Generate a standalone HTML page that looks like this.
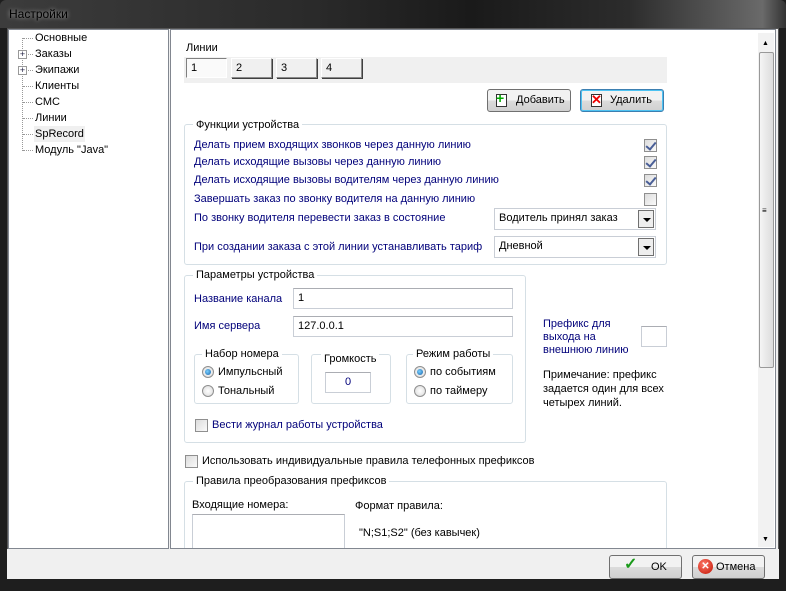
<!DOCTYPE html>
<html><head><meta charset="utf-8"><style>
*{box-sizing:border-box;margin:0;padding:0}
body{width:786px;height:591px;overflow:hidden;font-family:"Liberation Sans",sans-serif;font-size:11px;background:#1e1e1e;position:relative;color:#000}
.a{position:absolute}
.t{position:absolute;white-space:nowrap;line-height:13px}
.b{color:#00007a}
.grp{position:absolute;border:1px solid #d5dfe5;border-radius:3px}
.gt{position:absolute;background:#fff;padding:0 3px;line-height:13px;white-space:nowrap}
.inp{position:absolute;background:#fff;border:1px solid #c9ced6;border-top-color:#abadb3;padding:2px 4px;line-height:14px}
.cb{position:absolute;width:13px;height:13px;border:1px solid #8f8f8f;background:linear-gradient(135deg,#dcdcdc,#fafafa)}
.chk::after{content:"";position:absolute;left:3px;top:0px;width:4px;height:8px;border:solid #4a5f97;border-width:0 2px 2px 0;transform:rotate(40deg)}
.rb{position:absolute;width:12px;height:12px;border-radius:50%;border:1px solid #8f8f8f;background:radial-gradient(#fff,#d8d8d8)}
.rb.on::after{content:"";position:absolute;left:2px;top:2px;width:6px;height:6px;border-radius:50%;background:radial-gradient(circle at 40% 40%,#7ad0ff,#1560a8)}
.btn{position:absolute;border:1px solid #707070;border-radius:3px;background:linear-gradient(#f2f2f2 50%,#dcdcdc 50%,#d0d0d0);text-align:center}
.tab{position:absolute;height:20px;border:1px solid #8a8a8a;border-top-color:#fff;border-left-color:#fff;background:#f0f0f0;padding:3px 4px;line-height:13px;box-shadow:1px 1px 0 #404040}
.cmb{position:absolute;background:#fff;border:1px solid #c9ced6;padding:3px 4px;line-height:13px}
.arr{position:absolute;right:1px;top:1px;width:16px;height:18px;border:1px solid #707070;background:#eee}
.arr::after{content:"";position:absolute;left:4px;top:7px;border:4px solid transparent;border-top:4px solid #000;border-bottom:0}
.tl{position:absolute;left:35px;line-height:16px;white-space:nowrap}
.dt{position:absolute;left:23px;width:10px;border-top:1px dotted #999}
</style></head><body>
<div class="a" style="left:0;top:0;width:786px;height:28px;background:linear-gradient(90deg,#3c3c3c 0%,#2a2a2a 40%,#1a1a1a 60%,#2c2c2c 80%,#6a6a6a 97%,#333 100%);border-radius:6px 6px 0 0"></div>
<div class="t" style="left:9px;top:8px;font-size:12px;color:#000;text-shadow:0 0 4px #bbb">Настройки</div>
<div class="a" style="left:7px;top:28px;width:772px;height:551px;background:#f0f0f0;border:1px solid #555"></div>
<!-- tree -->
<div class="a" style="left:8px;top:29px;width:161px;height:520px;background:#fff;border:1px solid #828790"></div>
<div class="a" style="left:22px;top:38px;height:113px;border-left:1px dotted #999"></div>
<div class="dt" style="top:38px"></div><div class="dt" style="top:54px;left:28px;width:5px"></div><div class="dt" style="top:70px;left:28px;width:5px"></div>
<div class="dt" style="top:86px"></div><div class="dt" style="top:102px"></div><div class="dt" style="top:118px"></div><div class="dt" style="top:134px"></div><div class="dt" style="top:150px"></div>
<div class="tl" style="top:30px">Основные</div>
<div class="tl" style="top:46px">Заказы</div>
<div class="tl" style="top:62px">Экипажи</div>
<div class="tl" style="top:78px">Клиенты</div>
<div class="tl" style="top:94px">СМС</div>
<div class="tl" style="top:110px">Линии</div>
<div class="tl" style="top:126px;background:#f0f0f0;padding:0 1px;left:34px">SpRecord</div>
<div class="tl" style="top:142px">Модуль "Java"</div>
<div class="a" style="left:18px;top:50px;width:9px;height:9px;border:1px solid #999;background:#fff;font-size:9px;line-height:7px;text-align:center;color:#224">+</div>
<div class="a" style="left:18px;top:66px;width:9px;height:9px;border:1px solid #999;background:#fff;font-size:9px;line-height:7px;text-align:center;color:#224">+</div>
<!-- right panel -->
<div class="a" style="left:170px;top:29px;width:606px;height:520px;background:#fff;border:1px solid #828790;overflow:hidden">
<div class="inp" style="left:21px;top:484px;width:153px;height:40px"></div>
<div class="grp" style="left:13px;top:451px;width:483px;height:80px"></div>
</div>
<div class="a" style="left:758px;top:33px;width:16px;height:514px;background:#f2f2f2"></div>
<div class="a" style="left:759px;top:52px;width:15px;height:316px;border:1px solid #999;border-radius:2px;background:linear-gradient(90deg,#f5f5f5,#dcdcdc)"></div>
<div class="t" style="left:762px;top:204px;font-size:8px">≡</div>
<div class="t" style="left:762px;top:37px;font-size:7px">▲</div>
<div class="t" style="left:762px;top:533px;font-size:7px">▼</div>
<div class="t" style="left:186px;top:42px">Линии</div>
<div class="a" style="left:184px;top:57px;width:483px;height:26px;background:#f0f0f0"></div>
<div class="tab" style="left:186px;top:58px;width:41px;background:#fafafa;border-color:#808080 #fff #fff #808080;box-shadow:none">1</div>
<div class="tab" style="left:231px;top:58px;width:41px">2</div>
<div class="tab" style="left:276px;top:58px;width:41px">3</div>
<div class="tab" style="left:321px;top:58px;width:41px">4</div>
<div class="btn" style="left:487px;top:89px;width:84px;height:23px"></div>
<div class="a" style="left:496px;top:94px;width:11px;height:13px;background:#fff;border:1px solid #333"></div>
<div class="t" style="left:496px;top:92px;color:#0a0;font-weight:bold;font-size:14px">+</div>
<div class="t" style="left:516px;top:94px">Добавить</div>
<div class="btn" style="left:580px;top:89px;width:84px;height:23px;border:1px solid #3c7fb1;box-shadow:inset 0 0 0 1px #4ec3f2"></div>
<div class="a" style="left:591px;top:94px;width:11px;height:13px;background:#fff;border:1px solid #333"></div>
<div class="t" style="left:591px;top:93px;color:#e00;font-weight:bold;font-size:13px">✕</div>
<div class="t" style="left:610px;top:94px">Удалить</div>
<!-- group 1 -->
<div class="grp" style="left:184px;top:124px;width:483px;height:141px"></div>
<div class="gt" style="left:193px;top:119px">Функции устройства</div>
<div class="t b" style="left:194px;top:139px">Делать прием входящих звонков через данную линию</div>
<div class="t b" style="left:194px;top:156px">Делать исходящие вызовы через данную линию</div>
<div class="t b" style="left:194px;top:174px">Делать исходящие вызовы водителям через данную линию</div>
<div class="t b" style="left:194px;top:193px">Завершать заказ по звонку водителя на данную линию</div>
<div class="t b" style="left:194px;top:212px">По звонку водителя перевести заказ в состояние</div>
<div class="t b" style="left:194px;top:241px">При создании заказа с этой линии устанавливать тариф</div>
<div class="cb chk" style="left:644px;top:139px"></div>
<div class="cb chk" style="left:644px;top:156px"></div>
<div class="cb chk" style="left:644px;top:174px"></div>
<div class="cb" style="left:644px;top:193px"></div>
<div class="cmb" style="left:494px;top:208px;width:162px;height:22px">Водитель принял заказ<div class="arr"></div></div>
<div class="cmb" style="left:494px;top:236px;width:162px;height:22px">Дневной<div class="arr"></div></div>
<!-- group 2 -->
<div class="grp" style="left:184px;top:275px;width:342px;height:168px"></div>
<div class="gt" style="left:193px;top:269px">Параметры устройства</div>
<div class="t b" style="left:194px;top:293px">Название канала</div>
<div class="t b" style="left:194px;top:320px">Имя сервера</div>
<div class="inp" style="left:293px;top:288px;width:220px;height:21px">1</div>
<div class="inp" style="left:293px;top:316px;width:220px;height:21px">127.0.0.1</div>
<div class="grp" style="left:194px;top:354px;width:105px;height:50px"></div>
<div class="gt" style="left:202px;top:348px">Набор номера</div>
<div class="rb on" style="left:202px;top:366px"></div><div class="t" style="left:218px;top:366px">Импульсный</div>
<div class="rb" style="left:202px;top:385px"></div><div class="t" style="left:218px;top:385px">Тональный</div>
<div class="grp" style="left:311px;top:354px;width:80px;height:50px"></div>
<div class="gt" style="left:321px;top:353px">Громкость</div>
<div class="inp" style="left:325px;top:372px;width:46px;height:21px;text-align:center;color:#00007a">0</div>
<div class="grp" style="left:406px;top:354px;width:107px;height:50px"></div>
<div class="gt" style="left:413px;top:348px">Режим работы</div>
<div class="rb on" style="left:414px;top:366px"></div><div class="t" style="left:430px;top:366px">по событиям</div>
<div class="rb" style="left:414px;top:385px"></div><div class="t" style="left:430px;top:385px">по таймеру</div>
<div class="cb" style="left:195px;top:419px"></div>
<div class="t b" style="left:212px;top:419px">Вести журнал работы устройства</div>
<div class="t b" style="left:543px;top:318px;line-height:13px">Префикс для<br>выхода на<br>внешнюю линию</div>
<div class="inp" style="left:641px;top:326px;width:26px;height:21px"></div>
<div class="t" style="left:543px;top:368px;line-height:14px">Примечание: префикс<br>задается один для всех<br>четырех линий.</div>
<div class="cb" style="left:185px;top:455px"></div>
<div class="t" style="left:202px;top:455px">Использовать индивидуальные правила телефонных префиксов</div>
<div class="gt" style="left:193px;top:475px">Правила преобразования префиксов</div>
<div class="t" style="left:192px;top:499px">Входящие номера:</div>
<div class="t" style="left:355px;top:500px">Формат правила:</div>
<div class="t" style="left:359px;top:527px">"N;S1;S2" (без кавычек)</div>
<!-- bottom -->
<div class="a" style="left:7px;top:549px;width:772px;height:30px;background:#f0f0f0"></div>
<div class="btn" style="left:609px;top:555px;width:73px;height:24px"></div>
<div class="t" style="left:624px;top:558px;color:#1a9a1a;font-size:16px;font-weight:bold">✓</div>
<div class="t" style="left:651px;top:561px">OK</div>
<div class="btn" style="left:692px;top:555px;width:73px;height:24px"></div>
<div class="a" style="left:698px;top:559px;width:15px;height:15px;border-radius:50%;background:radial-gradient(circle at 40% 35%,#ff7a6a,#c01000);color:#fff;font-size:10px;line-height:15px;text-align:center;font-weight:bold">✕</div>
<div class="t" style="left:716px;top:561px">Отмена</div>
</body></html>
